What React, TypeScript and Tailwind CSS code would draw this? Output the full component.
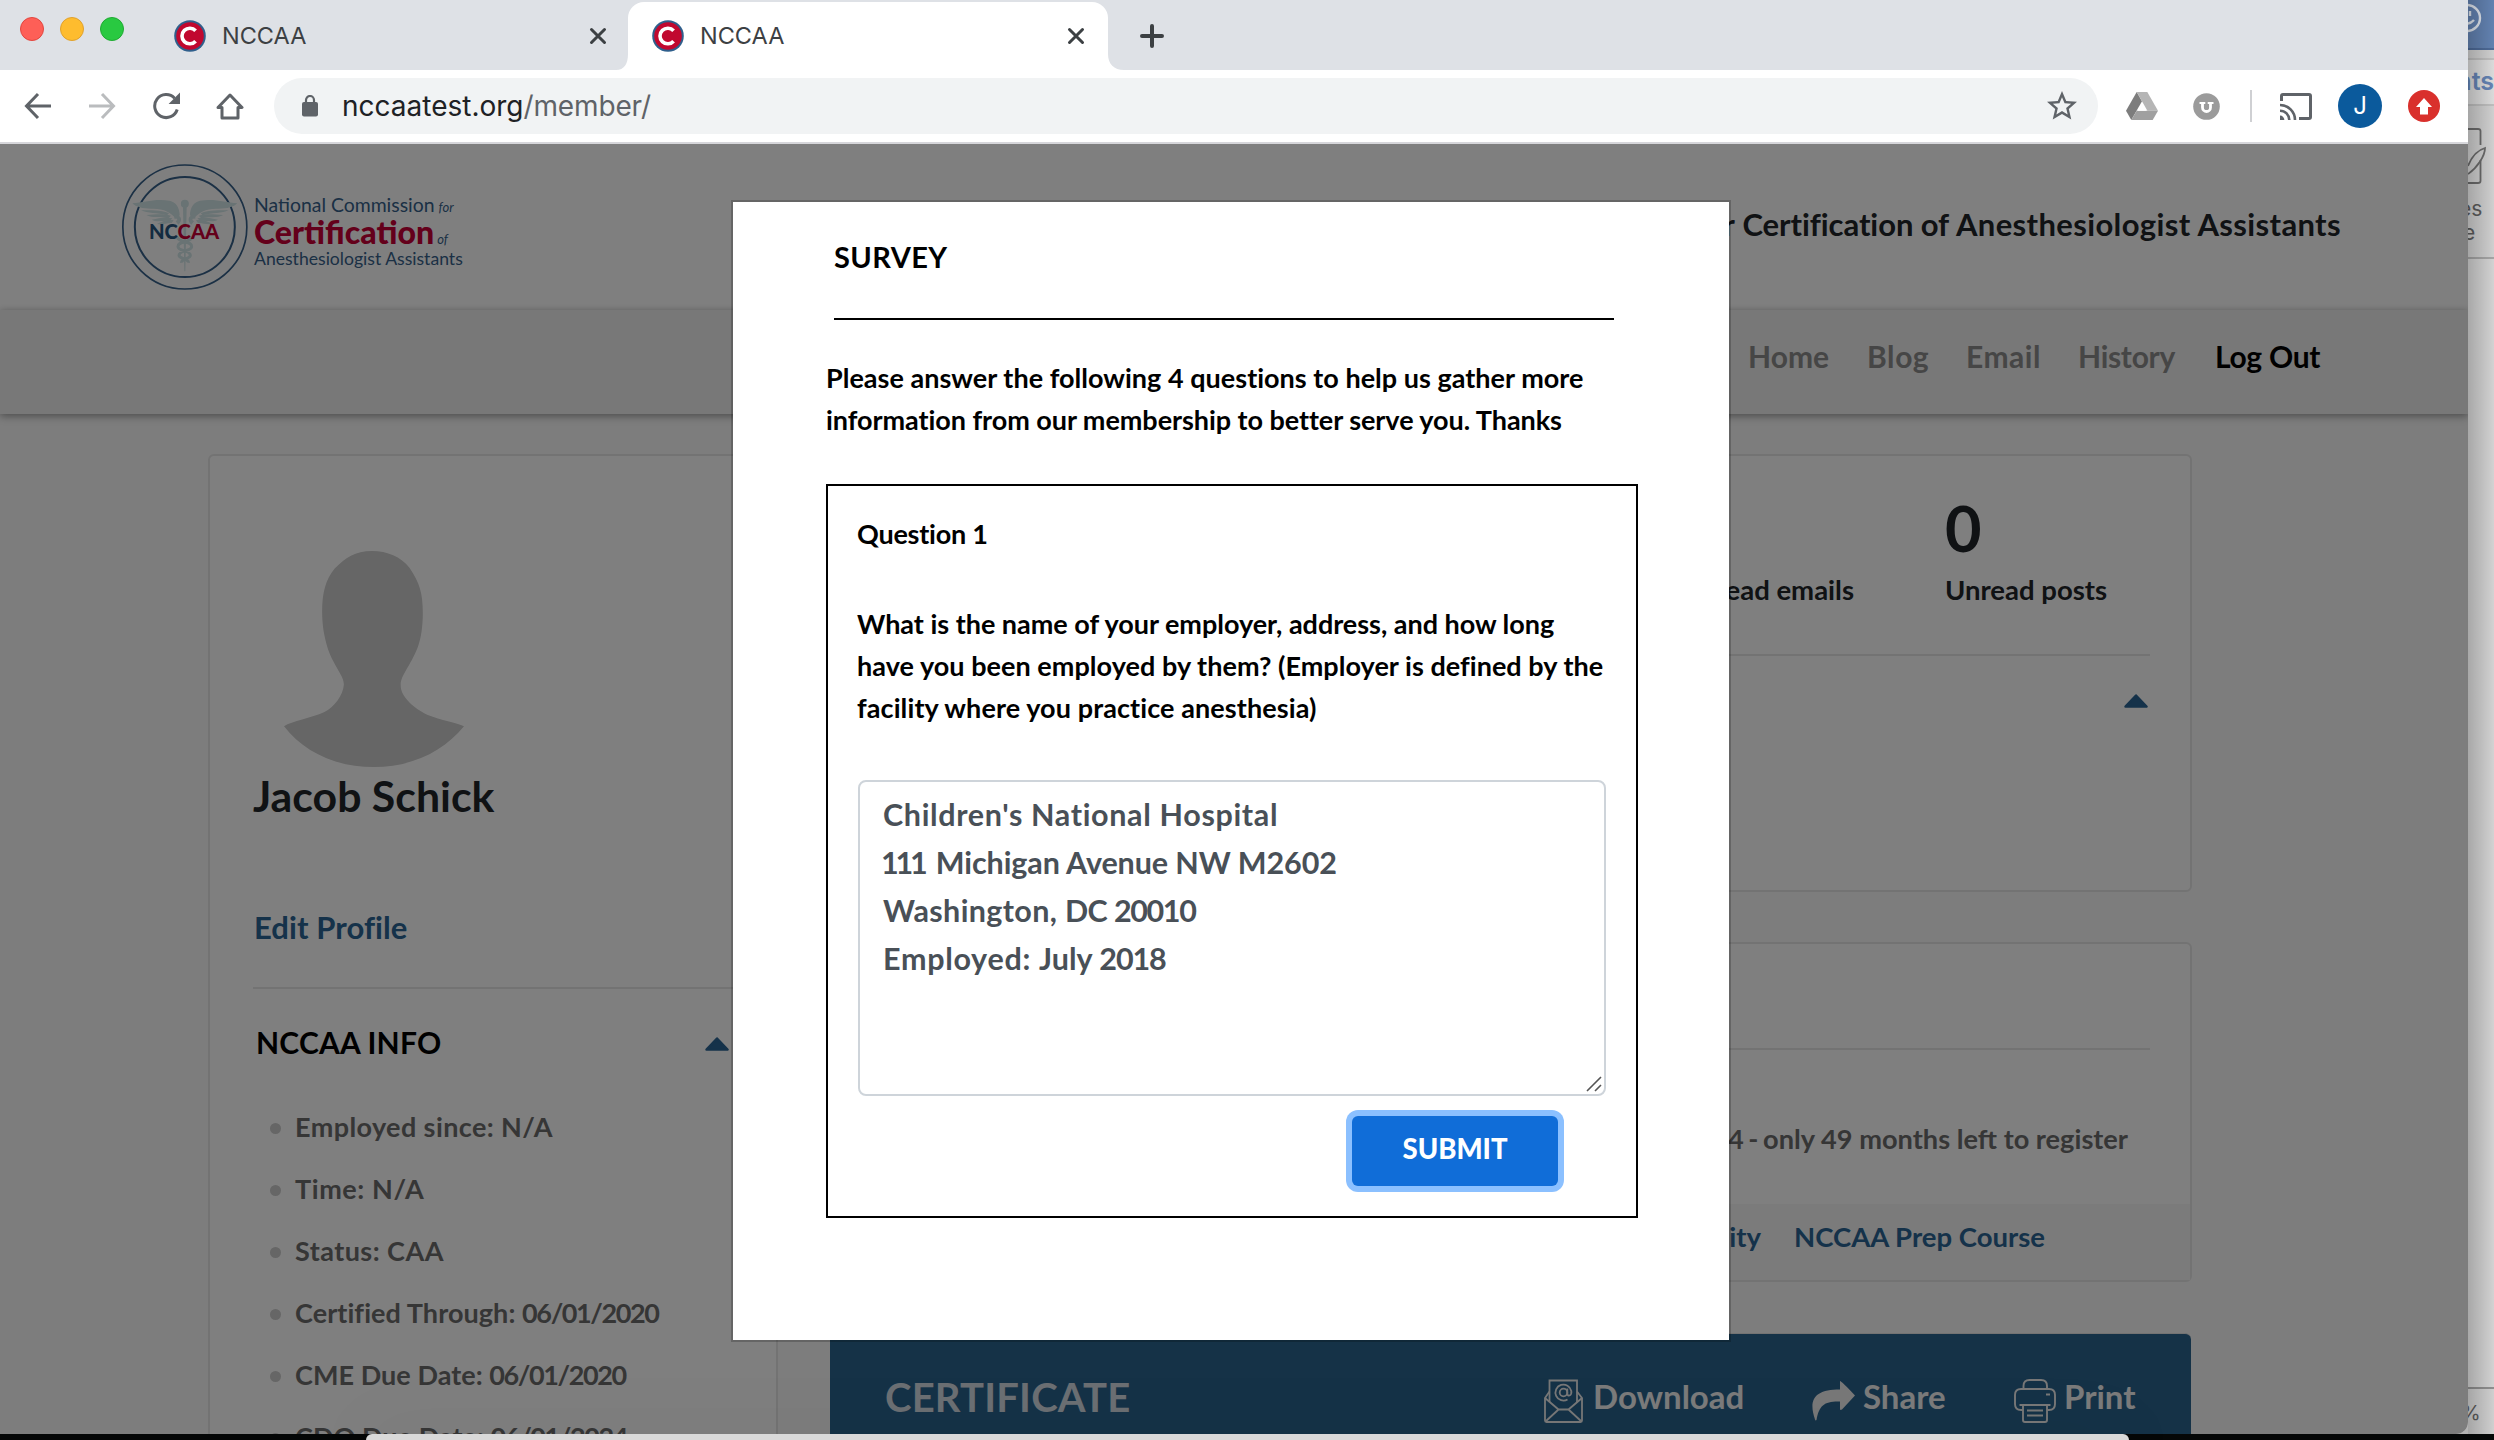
import type { ReactNode } from 'react';

/* ---------- Browser chrome ---------- */

function Favicon() {
  return (
    <svg className="h-8 w-8 shrink-0" viewBox="0 0 32 32">
      <circle cx="16" cy="16" r="15.8" fill="#2f5f8c" />
      <circle cx="16" cy="16" r="13.8" fill="#c1082f" />
      <path d="M21.6 10.8 A7.8 7.8 0 1 0 21.6 21.2" fill="none" stroke="#fff" strokeWidth="3.6" />
    </svg>
  );
}

function CloseIcon() {
  return (
    <svg className="h-[18px] w-[18px]" viewBox="0 0 18 18">
      <path d="M2.500 2.500 L15.500 15.500 M15.500 2.500 L2.500 15.500" stroke="#3c4043" strokeWidth="3" strokeLinecap="round" />
    </svg>
  );
}

function TabStrip() {
  return (
    <div className="flex h-[70px] bg-[#dee1e6]">
      <div className="flex w-[174px] gap-4 pt-[17px] pl-5">
        <i className="h-6 w-6 rounded-full border border-[#e2463f] bg-[#fe5f57]" />
        <i className="h-6 w-6 rounded-full border border-[#e0a12d] bg-[#febc2e]" />
        <i className="h-6 w-6 rounded-full border border-[#1faa32] bg-[#29c941]" />
      </div>
      <div className="flex h-[72px] w-[442px] items-center">
        <Favicon />
        <span className="ml-4 grow text-[23.5px] text-[#3c4043]">NCCAA</span>
        <span className="mr-[9px]">
          <CloseIcon />
        </span>
      </div>
      <svg className="mt-[54px] h-4 w-3" viewBox="0 0 12 16">
        <path d="M0 16 C8 16 12 10 12 0 V16 Z" fill="#fff" />
      </svg>
      <div className="mt-0.5 flex h-[68px] w-[480px] items-center rounded-t-[16px] bg-white pl-6">
        <Favicon />
        <span className="ml-4 grow text-[23.5px] text-[#3c4043]">NCCAA</span>
        <span className="mr-[23px]">
          <CloseIcon />
        </span>
      </div>
      <svg className="mt-[54px] h-4 w-4" viewBox="0 0 16 16">
        <path d="M16 16 C6 16 0 10 0 0 V16 Z" fill="#fff" />
      </svg>
      <svg className="mt-6 ml-4 h-6 w-6" viewBox="0 0 24 24">
        <path d="M12 2 V22 M2 12 H22" stroke="#3c4043" strokeWidth="4" strokeLinecap="round" />
      </svg>
    </div>
  );
}

function Toolbar() {
  return (
    <div className="flex h-[74px] items-center border-b-2 border-[#d6d6da] bg-white">
      <svg className="ml-6 h-7 w-7" viewBox="0 0 28 28">
        <path d="M27 14 H3 M14 2 L2.5 14 L14 26" fill="none" stroke="#5f6368" strokeWidth="3" />
      </svg>
      <svg className="ml-9 h-7 w-7" viewBox="0 0 28 28">
        <path d="M1 14 H25 M14 2 L25.5 14 L14 26" fill="none" stroke="#babcbe" strokeWidth="3" />
      </svg>
      <svg className="ml-9 h-7 w-7" viewBox="0 0 28 28">
        <path d="M22.6 6.2 A11.5 11.5 0 1 0 25.2 17.5" fill="none" stroke="#5f6368" strokeWidth="3" />
        <path d="M28 0.6 V12 H16.6 Z" fill="#5f6368" />
      </svg>
      <svg className="ml-9 h-7 w-7" viewBox="0 0 28 28">
        <path d="M2 15.5 L14 3 L26 15.5 H22 V26 H6 V15.5 Z" fill="none" stroke="#5f6368" strokeWidth="3" strokeLinejoin="round" />
      </svg>
      <div className="ml-[30px] flex h-14 w-[1824px] items-center rounded-full bg-[#f1f3f4] pl-7">
        <svg className="h-[22px] w-4" viewBox="0 0 16 22">
          <rect y="7" width="16" height="14.5" rx="2" fill="#5f6368" />
          <path d="M4 8 V5 A4 4 0 0 1 12 5 V8" fill="none" stroke="#5f6368" strokeWidth="2.2" />
        </svg>
        <div className="ml-6 grow text-[28px] leading-[40px] text-[#5f6368]">
          <span className="text-[#202124]">nccaatest.org</span>
          <span className="tracking-[-0.15px]">/member/</span>
        </div>
        <svg className="mr-[18px] h-9 w-9" viewBox="0 0 24 24">
          <path
            d="M22 9.24l-7.19-.62L12 2 9.19 8.63 2 9.24l5.46 4.73L5.82 21 12 17.27 18.18 21l-1.63-7.03L22 9.24zM12 15.4l-3.76 2.27 1-4.28-3.32-2.88 4.38-.38L12 6.1l1.71 4.04 4.38.38-3.32 2.88 1 4.28L12 15.4z"
            fill="#5f6368"
          />
        </svg>
      </div>
      <svg className="ml-7 h-7 w-8" viewBox="0 0 32 28">
        <path d="M10.7 0 L0 18.7 L5.3 28 L16 9.3 Z" fill="#7d7d7d" />
        <path d="M10.7 0 H21.3 L32 18.7 H21.4 Z" fill="#b5b5b5" />
        <path d="M10.7 18.7 H32 L26.7 28 H5.3 Z" fill="#a0a0a0" />
        <path d="M16 12 L20.3 18.7 H11.7 Z" fill="#fff" />
      </svg>
      <svg className="ml-[35px] h-[27px] w-[27px]" viewBox="0 0 27 27">
        <circle cx="13.5" cy="13.5" r="13.3" fill="#9b9b9b" />
        <path d="M9.5 9 V14.5 A4 4 0 0 0 17.5 14.5 V9" fill="none" stroke="#fff" strokeWidth="2.8" />
        <path d="M6.5 10 H12.3 M14.7 10 H20.5" stroke="#fff" strokeWidth="2" />
      </svg>
      <div className="ml-[30px] h-8 w-0.5 bg-[#cfd0d3]" />
      <svg className="ml-7 h-[27px] w-8" viewBox="0 0 32 27">
        <path d="M1.5 8 V3 Q1.5 1.5 3 1.5 H29 Q30.5 1.5 30.5 3 V24 Q30.5 25.5 29 25.5 H19" fill="none" stroke="#5f6368" strokeWidth="3" />
        <path d="M0 12 A15 15 0 0 1 15 27 M0 17.7 A9.3 9.3 0 0 1 9.3 27" fill="none" stroke="#5f6368" strokeWidth="2.6" />
        <path d="M0 22.6 A4.4 4.4 0 0 1 4.4 27 H0 Z" fill="#5f6368" />
      </svg>
      <div className="ml-[26px] flex h-11 w-11 items-center justify-center rounded-full bg-[#0b5a9c] text-[24px] text-white">J</div>
      <svg className="ml-[26px] h-8 w-8" viewBox="0 0 32 32">
        <circle cx="16" cy="16" r="16" fill="#d9302c" />
        <path d="M16 8 L24 17 H20 V24.5 H12 V17 H8 Z" fill="#fff" />
      </svg>
    </div>
  );
}

/* ---------- Member page ---------- */

const feathers = (
  <g fill="#d2e6e8">
    <path d="M66 160 C100 158 130 146 178 152 C196 156 208 172 208 196 L196 206 C184 188 160 176 130 176 C100 177 78 172 66 160 Z" />
    <path d="M92 180 C120 182 150 178 176 190 L170 196 C140 186 112 192 92 180 Z" />
    <path d="M108 195 C134 194 156 190 182 197 L174 205 C150 198 126 206 108 195 Z" />
    <path d="M124 209 C146 205 164 199 186 205 L178 213 C160 210 140 218 124 209 Z" />
    <path d="M140 221 C158 214 172 208 190 211 L184 219 C170 218 154 226 140 221 Z" />
    <path d="M192 196 C214 192 218 212 204 224 L196 214 C204 208 202 204 192 206 Z" />
  </g>
);

function Seal() {
  return (
    <div className="relative h-32 w-32">
      <svg className="h-32 w-32" viewBox="32 39 384 384">
        <circle cx="223.500" cy="231" r="186" fill="none" stroke="#36618a" strokeWidth="5" />
        <circle cx="223.500" cy="231" r="150" fill="none" stroke="#36618a" strokeWidth="6" />
        {feathers}
        <g transform="translate(447 0) scale(-1 1)">{feathers}</g>
        <circle cx="223.500" cy="161" r="12" fill="#d2e6e8" />
        <path d="M218 170 H229 L225 364 H222 Z" fill="#d2e6e8" />
        <path
          d="M200 262 C214 282 244 272 244 290 C244 304 206 300 206 316 C206 328 236 324 234 338 M246 262 C232 282 203 272 203 290 C203 304 240 300 240 316 C240 328 212 324 214 338"
          fill="none"
          stroke="#d2e6e8"
          strokeWidth="9"
        />
      </svg>
      <div className="absolute top-[56px] left-[28px] font-['Lato'] text-[20.2px] leading-[24px] font-black text-[#275680]">
        NC<span className="text-[#c90036]">CAA</span>
      </div>
    </div>
  );
}

function Header() {
  return (
    <div className="flex h-[166px] justify-between bg-white">
      <div className="flex pt-[19px] pl-[121px]">
        <Seal />
        <div className="pt-[30px] pl-[5px] text-[#36618a]">
          <div className="text-[19.4px] leading-6">
            National Commission<span className="ml-1 text-[13px] italic">for</span>
          </div>
          <div className="-mt-[3px] text-[32.1px] leading-8 font-black text-[#c90036]">
            Certification<span className="ml-[3px] text-[13px] font-normal text-[#36618a] italic">of</span>
          </div>
          <div className="-mt-[7px] text-[17.6px] leading-[22px]">Anesthesiologist Assistants</div>
        </div>
      </div>
      <h1 className="mt-[60px] mr-[127px] text-[31px] leading-10 font-bold tracking-[0.36px] text-[#212529]">
        National Commission for <span className="tracking-[-0.08px]">Certification of</span> Anesthesiologist Assistants
      </h1>
    </div>
  );
}

function Nav() {
  return (
    <div className="relative flex h-[104px] items-center bg-[#f0f0f0] pb-[11px] pl-[1748px] text-[30px] font-bold text-[#8c8c8c] shadow-[0_2px_8px_rgba(0,0,0,0.4)]">
      <a className="w-[119px]">Home</a>
      <a className="w-[99px] tracking-[0.6px]">Blog</a>
      <a className="w-[112px] tracking-[0.5px]">Email</a>
      <a className="w-[137px] tracking-[-0.28px]">History</a>
      <a className="tracking-[-0.28px] text-black">Log Out</a>
    </div>
  );
}

function Caret() {
  return (
    <svg className="h-[14px] w-6" viewBox="0 0 24 14">
      <path d="M12 1.500 L22.500 12.500 H1.500 Z" fill="#2a6494" stroke="#2a6494" strokeWidth="2.500" strokeLinejoin="round" />
    </svg>
  );
}

function InfoItem({ children }: { children: ReactNode }) {
  return (
    <li className="flex h-[62px] items-center whitespace-pre">
      <i className="mt-0.5 mr-[14px] ml-[17px] h-[11px] w-[11px] rounded-full bg-[#ccc]" />
      {children}
    </li>
  );
}

function ProfileCard() {
  return (
    <div className="w-[570px] rounded-t-md border-2 border-[#e6e6e6] bg-white pl-[43px]">
      <svg className="mt-[95px] ml-[31px] h-[216px] w-[180px]" viewBox="219 311 472 606" preserveAspectRatio="none">
        <path
          d="M450 311 C490 311 525 327 548 358 C575 400 583 430 583 485 C583 520 579 555 570 580 C550 635 524 660 525 688 C525 720 560 752 596 771 C630 786 672 792 691 803 C640 870 560 917 455 917 C350 917 270 873 219 803 C240 788 290 780 325 763 C350 750 375 715 376 685 C376 660 350 635 334 585 C324 550 319 520 319 480 C319 430 328 390 352 360 C380 330 405 311 450 311 Z"
          fill="#ccc"
        />
      </svg>
      <div className="mt-[3px] text-[42.8px] leading-[52px] font-bold text-[#212529]">Jacob Schick</div>
      <a className="mt-[86px] ml-px block text-[31px] leading-[38px] font-bold tracking-[0.08px] text-[#2a6494]">Edit Profile</a>
      <div className="mt-[41px] mr-[43px] h-0.5 bg-[#e6e6e6]" />
      <div className="mt-[35px] flex justify-between pr-[47px]">
        <div className="ml-[3px] text-[30px] leading-9 font-bold tracking-[0.2px] text-black">NCCAA INFO</div>
        <span className="pt-[13px]">
          <Caret />
        </span>
      </div>
      <ul className="mt-9 text-[27px] font-bold text-[#6c6c6c]">
        <InfoItem>
          <span className="tracking-[0.4px]">Employed since: N/A</span>
        </InfoItem>
        <InfoItem>
          <span className="tracking-[0.6px]">Time: N/A</span>
        </InfoItem>
        <InfoItem>
          <span className="tracking-[0.46px]">Status: CAA</span>
        </InfoItem>
        <InfoItem>
          <span className="tracking-[0.08px]">Certified Through: </span>
          <span className="tracking-[-1.4px]">06/01/2020</span>
        </InfoItem>
        <InfoItem>
          <span className="tracking-[0.05px]">CME Due Date: </span>
          <span className="tracking-[-1.4px]">06/01/2020</span>
        </InfoItem>
        <InfoItem>
          <span className="tracking-[0.05px]">CDQ Due Date: </span>
          <span className="tracking-[-1.4px]">06/01/2024</span>
        </InfoItem>
      </ul>
    </div>
  );
}

function Stat({ value, label }: { value: string; label: string }) {
  return (
    <div>
      <div className="text-[63px] leading-[70px]">{value}</div>
      <div className="mt-2.5 text-[27.5px] leading-[34px]">{label}</div>
    </div>
  );
}

function StatsCard() {
  return (
    <div className="h-[438px] rounded-md border-2 border-[#e6e6e6] bg-white font-bold text-[#212529]">
      <div className="flex pt-[37px]">
        <div className="flex w-[1023px] justify-end">
          <Stat value="0" label="Unread emails" />
        </div>
        <div className="ml-[91px]">
          <Stat value="0" label="Unread posts" />
        </div>
      </div>
      <div className="mt-[47px] mr-10 ml-10 h-0.5 bg-[#e6e6e6]" />
      <div className="flex justify-end pt-[38px] pr-[42px]">
        <Caret />
      </div>
    </div>
  );
}

function RegistrationCard() {
  return (
    <div className="mt-[50px] flex h-[340px] flex-col rounded-md border-2 border-[#e6e6e6] bg-white font-bold">
      <div className="mt-[104px] mr-10 ml-10 h-0.5 bg-[#e6e6e6]" />
      <div className="mt-[72px] pr-[62px] text-right text-[27.2px] leading-[34px] text-[#6c6c6c]">
        <span className="tracking-[-1px]">4 - </span>only 49 months left to register
      </div>
      <div className="mt-auto flex h-[76px] bg-[#f6f6f6] pt-4 text-[27.5px] leading-[34px] text-[#2a6494]">
        <span className="w-[930px] text-right">ity</span>
        <span className="ml-[33px]">NCCAA Prep Course</span>
      </div>
    </div>
  );
}

function CertificateCard() {
  return (
    <div className="mt-[51px] ml-px flex h-[140px] w-[1361px] rounded-t-md border-t border-[#e6e6e6] bg-[#2b648e] pl-[55px] font-bold text-[#f6f6f6]">
      <div className="mt-[39px] w-[659px] text-[40px] leading-[48px] tracking-[0.2px] text-[#d6dee6]">CERTIFICATE</div>
      <div className="flex w-[267px] gap-2.5 pt-[42px] text-[33px] leading-10">
        <svg className="mt-[3px] h-11 w-[39px]" viewBox="0 0 39 44" fill="none" stroke="#f0f0f0" strokeWidth="1.800">
          <path d="M5.500 23 V1.500 H33 V23" />
          <path d="M5.500 12.500 L1 19 V41.500 Q1 43 2.500 43 H36.500 Q38 43 38 41.500 V19 L33 12.500" />
          <path d="M1 19 L14.500 30.500 H24.500 L38 19 M14.500 30.500 L1.500 42.500 M24.500 30.500 L37.500 42.500" />
          <circle cx="19.500" cy="13.500" r="3.800" />
          <path d="M23.300 9.500 V14.500 Q23.500 17 25.500 16.500 Q27.800 15.500 27.300 12 A8 8 0 1 0 23.500 20.500" />
        </svg>
        Download
      </div>
      <div className="flex w-[203px] gap-2 pt-[42px] text-[33px] leading-10">
        <svg className="mt-[5px] h-10 w-11" viewBox="0 0 44 40">
          <path d="M29 0 Q30.500 0 44 14.500 L31 28.500 Q29 29.500 29 28 V20.500 C14 20 8 24 5.500 39 Q4.500 40 4 38.500 C-3 18 4 8.500 29 8.500 Z" fill="#f0f0f0" />
        </svg>
        Share
      </div>
      <div className="flex gap-2 pt-[42px] text-[33px] leading-10">
        <svg className="mt-[3px] h-11 w-[42px]" viewBox="0 0 42 44" fill="none" stroke="#f0f0f0" strokeWidth="1.900">
          <path d="M9.500 10 V7 Q9.500 1 15.500 1 H27 Q33 1 33 7 V10" />
          <path d="M9 31 H7 Q1 31 1 25 V16 Q1 10 7 10 H35 Q41 10 41 16 V25 Q41 31 35 31 H33" />
          <path d="M5.500 26 H36.500 M9 26 V41 Q9 43 11 43 H31 Q33 43 33 41 V26 M13 31.500 H29 M13 36.500 H29 M32 15.500 H36" />
        </svg>
        Print
      </div>
    </div>
  );
}

/* ---------- Survey dialog ---------- */

function SurveyDialog() {
  return (
    <div className="absolute top-[200px] left-[731px] h-[1142px] w-[1000px] border-2 border-black/20 bg-white bg-clip-padding pl-[92px] font-bold text-black">
      <h2 className="mt-[37px] ml-[9px] text-[29px] leading-9 tracking-[0.4px]">SURVEY</h2>
      <div className="mt-[43px] ml-[9px] h-0.5 w-[780px] bg-black" />
      <p className="mt-[37px] ml-px text-[27px] leading-[42px]">
        <span className="tracking-[0.02px]">Please answer the following 4 questions to help us gather more</span>
        <br />
        <span className="tracking-[-0.05px]">information from our membership to better serve you. Thanks</span>
      </p>
      <div className="mt-[43px] ml-px h-[734px] w-[812px] border-2 border-black pl-[29px] text-[27px] leading-[42px]">
        <div className="mt-[27px] tracking-[-0.23px]">Question 1</div>
        <p className="mt-12">
          <span className="tracking-[-0.02px]">What is the name of your employer, address, and how long</span>
          <br />
          <span className="tracking-[0.04px]">have you been employed by them? (Employer is defined by the</span>
          <br />
          <span className="tracking-[0.1px]">facility where you practice anesthesia)</span>
        </p>
        <div className="relative mt-[51px] ml-px h-[316px] w-[748px] rounded-lg border-2 border-[#ced4da] pt-2 pl-[23px] text-[30.5px] leading-[48px] text-[#495057]">
          <div className="tracking-[0.65px]">Children's National Hospital</div>
          <div className="tracking-[-0.1px]">
            <span className="-ml-0.5 tracking-[-3.2px]">111</span>
            <span className="ml-1"> Michigan Avenue NW M2602</span>
          </div>
          <div>
            <span className="tracking-[0.35px]">Washington, </span>
            <span className="tracking-[-0.6px]">DC </span>
            <span className="tracking-[-1.4px]">20010</span>
          </div>
          <div>
            <span className="tracking-[0.7px]">Employed: </span>July <span className="tracking-[-1.1px]">2018</span>
          </div>
          <svg className="absolute right-0.5 bottom-0.5 h-4 w-4" viewBox="0 0 16 16">
            <path d="M1 15 L15 1 M9 15 L15 9" stroke="#555" strokeWidth="1.600" />
          </svg>
        </div>
        <button className="mt-5 ml-[495px] block h-[70px] w-[206px] rounded-md bg-[#106dd8] pb-1 text-[27.5px] font-black text-white shadow-[0_0_0_6px_#8bc0ff]">
          SUBMIT
        </button>
      </div>
    </div>
  );
}

/* ---------- Window peeking out on the right ---------- */

function BackgroundWindow() {
  return (
    <div className="relative w-[26px] overflow-hidden bg-[#cfcfcf] font-['Inter'] text-[#5c5c5c]">
      <div className="h-[50px] border-b-2 border-[#4d6a97] bg-[#6281b0]">
        <svg className="-ml-3.5 h-9 w-7" viewBox="0 0 28 36" fill="none" stroke="#dfe5ee" strokeWidth="2.400">
          <circle cx="13" cy="18" r="13" />
          <path d="M16 11 V16 M7 20 Q13.500 27 20 20" />
        </svg>
      </div>
      <div className="mt-2 flex h-12 items-center justify-end border-y-2 border-[#bdbdbd] bg-[#dadada] text-[25px] font-semibold text-[#6483b3]">
        nts
      </div>
      <svg className="mt-[22px] h-14 w-5" viewBox="0 0 20 56" fill="none" stroke="#6b6b6b" strokeWidth="1.800">
        <path d="M0 1 H10 Q12.500 1 12.500 3 V17 M12.500 32 V53 Q12.500 55 10 55 H0" />
        <path d="M0 38 C4 28 10 22 17 20 C17 28 9 40 0 46" />
      </svg>
      <div className="mt-[13px] h-[62px] border-b-2 border-[#a5a5a5] text-[21px] leading-6">
        <div className="-ml-[9px]">es</div>
        <div className="-ml-[5px]">e</div>
      </div>
      <div className="h-[1128px] bg-[#d2d2d2]" />
      <div className="border-t-2 border-[#8f8f8f] pt-3 text-[20px] leading-6">
        <div className="-ml-[7px]">%</div>
      </div>
      <div className="absolute inset-0 bg-linear-to-r from-black/20 to-transparent" />
    </div>
  );
}

export default function App() {
  return (
    <div className="relative flex h-[1440px] w-[2494px] flex-col overflow-hidden bg-[#050707]">
      <div className="flex h-[1434px] bg-[#b4b4b4]">
        <div className="h-[1434px] w-[2468px] overflow-hidden rounded-br-[12px] font-['Inter']">
          <TabStrip />
          <Toolbar />
          <div className="relative h-[1290px] overflow-hidden bg-[#fafafa] font-['Lato']">
            <Header />
            <Nav />
            <div className="flex gap-[51px] pt-10 pl-[208px]">
              <ProfileCard />
              <div className="w-[1363px]">
                <StatsCard />
                <RegistrationCard />
                <CertificateCard />
              </div>
            </div>
            <div className="absolute inset-0 bg-black/50" />
          </div>
        </div>
        <BackgroundWindow />
      </div>
      <div className="relative ml-[366px] h-1.5 w-[1763px] rounded-t-[8px] bg-[#d9d9d9] shadow-[0_10px_70px_rgba(0,0,0,0.28)]" />
      <div className="absolute inset-0 font-['Lato']">
        <SurveyDialog />
      </div>
    </div>
  );
}
